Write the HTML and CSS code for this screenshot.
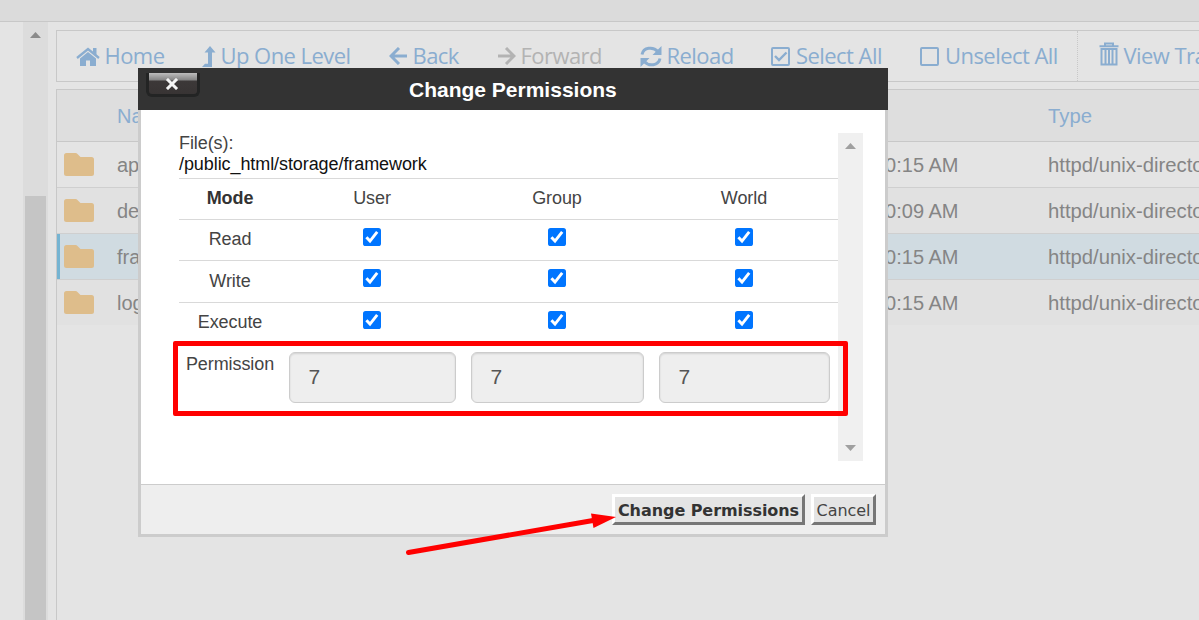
FILE: index.html
```html
<!DOCTYPE html>
<html lang="en">
<head>
<meta charset="utf-8">
<title>File Manager</title>
<link rel="stylesheet" href="styles.css">
</head>
<body>
<svg class="defs" width="0" height="0">
  <symbol id="check" viewBox="0 0 18 18"><rect width="18" height="18" rx="2.6" fill="#0075ff"/><path d="M3.400 9.200l3.600 3.900 7.200-9.300" fill="none" stroke="#fff" stroke-width="2.900"/></symbol>
  <symbol id="folder" viewBox="0 0 30 23"><path d="M2.500 0h9q1.200 0 2 .9l3 3.100h11q2.500 0 2.500 2.500v14q0 2.500-2.500 2.500h-25Q0 23 0 20.500V2.500Q0 0 2.500 0z" fill="#debd8b"/></symbol>
</svg>
<header class="topbar"></header>
<div class="workspace">
  <aside class="tree"></aside>
  <div class="scroll"><svg class="tri" width="11" height="6" viewBox="0 0 11 6"><path d="M5.500 0L11 6H0z"/></svg><div class="thumb"></div></div>
  <main class="files">
    <nav class="toolbar">
      <a class="tool"><svg width="24" height="19" viewBox="0 0 24 19"><path d="M1 11L12 2l11 9" fill="none" stroke="currentColor" stroke-width="2.300"/><path d="M17 1h3.500v7L17 5zM4 11.500l8-6.500 8 6.500V19h-6v-5.500h-4V19H4z" fill="currentColor"/></svg><span>Home</span></a>
      <a class="tool"><svg width="14" height="21" viewBox="0 0 14 21"><path d="M8 0l5.500 6.500H10V21H0l3-3.300h3V6.500H2.500z" fill="currentColor"/></svg><span>Up One Level</span></a>
      <a class="tool"><svg width="19" height="18" viewBox="0 0 19 18"><path d="M10 1L2 9l8 8M2.500 9H18" fill="none" stroke="currentColor" stroke-width="3"/></svg><span>Back</span></a>
      <a class="tool forward"><svg width="19" height="18" viewBox="0 0 19 18"><path d="M9 1l8 8-8 8M16.500 9H1" fill="none" stroke="currentColor" stroke-width="3"/></svg><span>Forward</span></a>
      <a class="tool"><svg width="22" height="21" viewBox="0 0 22 21"><path d="M2 8.500C3.500 1.500 13 0 18 5.800M20 12.500C18.500 19.500 9 21 4 15.200" fill="none" stroke="currentColor" stroke-width="3"/><path d="M21.500 0v9h-9zM.500 21v-9h9z" fill="currentColor"/></svg><span>Reload</span></a>
      <a class="tool box"><svg width="19" height="19" viewBox="0 0 19 19"><rect x="1" y="1" width="17" height="17" rx="1" fill="none" stroke="currentColor" stroke-width="2"/><path d="M4 9l4 4 7.500-7.500" fill="none" stroke="currentColor" stroke-width="2.400"/></svg><span>Select All</span></a>
      <a class="tool box"><svg width="19" height="19" viewBox="0 0 19 19"><rect x="1" y="1" width="17" height="17" rx="1" fill="none" stroke="currentColor" stroke-width="2"/></svg><span>Unselect All</span></a>
      <a class="tool trash"><svg width="20" height="24" viewBox="0 0 20 24"><path d="M.500 4.200h19M6 4V1.500h8V4" fill="none" stroke="currentColor" stroke-width="2"/><path d="M2.500 7v15.500h15V7zM6.500 7v15M10 7v15M13.500 7v15" fill="none" stroke="currentColor" stroke-width="2"/></svg><span>View Trash</span></a>
    </nav>
    <section class="list">
      <div class="row head"><span></span><span>Name</span><span></span><span class="type">Type</span></div>
      <div class="row"><svg class="folder"><use href="#folder"/></svg><span>app</span><span class="date">10:15 AM</span><span class="type">httpd/unix-directory</span></div>
      <div class="row even"><svg class="folder"><use href="#folder"/></svg><span>debugbar</span><span class="date">10:09 AM</span><span class="type">httpd/unix-directory</span></div>
      <div class="row selected"><svg class="folder"><use href="#folder"/></svg><span>framework</span><span class="date">10:15 AM</span><span class="type">httpd/unix-directory</span></div>
      <div class="row even last"><svg class="folder"><use href="#folder"/></svg><span>logs</span><span class="date">10:15 AM</span><span class="type">httpd/unix-directory</span></div>
    </section>
  </main>
</div>

<div class="dialog">
  <div class="titlebar">
    <div class="close"><svg width="14" height="12" viewBox="0 0 14 12"><path d="M3 2l8 8M11 2l-8 8" stroke="#f4f4f4" stroke-width="3" stroke-linecap="square"/></svg></div>
    <h1>Change Permissions</h1>
  </div>
  <div class="content">
    <div class="form">
      <div class="label">File(s):</div>
      <div class="path">/public_html/storage/framework</div>
      <div class="modes">
        <div class="mode"><b>Mode</b><span>User</span><span>Group</span><span>World</span></div>
        <div class="mode"><span>Read</span><svg><use href="#check"/></svg><svg><use href="#check"/></svg><svg><use href="#check"/></svg></div>
        <div class="mode tall"><span>Write</span><svg><use href="#check"/></svg><svg><use href="#check"/></svg><svg><use href="#check"/></svg></div>
        <div class="mode"><span>Execute</span><svg><use href="#check"/></svg><svg><use href="#check"/></svg><svg><use href="#check"/></svg></div>
        <div class="mode values"><span>Permission</span><div class="field">7</div><div class="field">7</div><div class="field">7</div></div>
      </div>
    </div>
    <div class="scroll light"><svg class="tri" width="11" height="6" viewBox="0 0 11 6"><path d="M5.500 0L11 6H0z"/></svg><svg class="tri" width="11" height="6" viewBox="0 0 11 6"><path d="M0 0h11L5.500 6z"/></svg></div>
  </div>
  <div class="actions"><div class="button primary">Change Permissions</div><div class="button">Cancel</div></div>
</div>
<div class="highlight"></div>
<svg class="arrow" width="212" height="46" viewBox="0 0 212 46"><path d="M3.500 42.500L188 10.500" stroke="#f00" stroke-width="5" stroke-linecap="round"/><path d="M186 3.500l25 3.500L188.500 18z" fill="#f00"/></svg>
</body>
</html>
```
FILE: styles.css
```css
* { box-sizing: border-box; }
body { margin: 0; width: 1199px; height: 620px; overflow: hidden; position: relative; background: #e4e4e4; font-family: "Liberation Sans", Arial, sans-serif; display: flex; flex-direction: column; }
.defs { position: absolute; }
.topbar { height: 22px; flex: none; background: #dbdbdb; border-bottom: 1px solid #c8c8c8; }
.workspace { flex: 1; display: flex; min-height: 0; }
.tree { width: 23px; flex: none; }
.scroll { width: 25px; flex: none; background: #dcdcdc; display: flex; flex-direction: column; padding: 10px 2px 0; }
.tri { flex: none; margin-left: 5px; fill: #8b8b8b; }
.thumb { flex: 1; width: 21px; margin-top: 158px; background: #c5c5c5; }
.files { flex: 1; min-width: 0; padding: 8px 0 0 8px; overflow: hidden; }
.toolbar { width: 1220px; height: 52px; border: 1px solid #c8c8c8; padding-left: 19px; display: grid; grid-template-columns: 126px 187px 108px 143px 131px 149px 157px 140px; }
.tool { display: flex; align-items: center; gap: 4.500px; color: #8aadd0; font: 400 22px/50px "Open Sans", sans-serif; letter-spacing: -.55px; white-space: nowrap; }
.tool svg { flex: none; }
.tool span { margin-top: -2px; }
.forward { color: #b3b3b3; }
.box { gap: 6px; }
.trash { border-left: 1px dotted #c8c8c8; padding-left: 21px; }
.trash svg { margin-top: -4px; }
.list { width: 1220px; height: 540px; margin-top: 7px; border: 1px solid #c8c8c8; }
.row { height: 46px; display: grid; grid-template-columns: 60px 757px 174px 1fr; align-items: center; border-bottom: 1px solid #cfcfcf; color: #858585; font-size: 20px; }
.row span { padding-top: 2px; }
.type { font-size: 20.300px; }
.head { height: 52px; background: #dedede; border-color: #c8c8c8; color: #8aadd0; }
.even { background: #e1e1e1; }
.last { border-bottom-color: #e4e4e4; }
.selected { background: #d0dbe1; box-shadow: inset 3px 0 #75b4d2; }
.folder { width: 30px; height: 23px; margin-left: 7px; }
.dialog { position: absolute; left: 138px; top: 68px; width: 750px; height: 469px; background: #fff; display: flex; flex-direction: column; }
.titlebar { height: 42px; background: #333; display: flex; padding: 5px 0 0 8px; }
.close { width: 54px; height: 24px; background: linear-gradient(#bdbdbd, #858585 7px, #3c3838 8px, #383434); border: 3px solid #232424; border-top: 0; border-radius: 0 0 6px 6px; display: flex; align-items: center; justify-content: center; padding-right: 3px; }
h1 { margin: 0 0 0 209px; color: #fff; font-size: 21px; line-height: 34px; white-space: nowrap; }
.content { height: 374px; border: 3px solid #ccc; border-width: 0 3px; padding: 23px 22px 0 38px; display: flex; }
.form { width: 659px; font-size: 18px; line-height: 21px; color: #444; letter-spacing: -.08px; }
.path { color: #111; }
.modes { margin-top: 3px; }
.mode { display: grid; grid-template-columns: 102px 182px 188px 186px; height: 41px; border-top: 1px solid #d9d9d9; text-align: center; padding-top: 9px; justify-items: center; }
.tall { height: 42px; padding-top: 10px; }
.mode b { color: #333; }
.mode svg { width: 18px; height: 18px; margin-top: -1px; }
.mode.tall svg { margin-top: -2px; }
.values { border-color: transparent; padding-top: 10px; }
.field { width: calc(100% - 15px); height: 51px; margin: -2px 0 0; border: 1px solid #ccc; border-radius: 6px; background: #eee; box-shadow: inset 0 1px 2px rgba(0,0,0,.12); text-align: left; padding-left: 19px; font-size: 21px; line-height: 48px; color: #555; }
.light { background: #f0f0f0; height: 328px; justify-content: space-between; padding-bottom: 10px; }
.light .tri { fill: #a0a0a0; }
.actions { flex: 1; background: #eee; border: 3px solid #ccc; border-top-width: 1px; display: flex; justify-content: flex-end; gap: 6px; padding: 9px 9px 0 0; }
.button { height: 31px; width: 65px; border: 3px solid; border-color: #fff #767676 #767676 #fff; background: #e4e4e4; font: 16px/27px "DejaVu Sans", sans-serif; letter-spacing: -.06px; color: #444; text-align: center; white-space: nowrap; }
.primary { width: 193px; font-weight: 700; color: #333; }
.highlight { position: absolute; left: 173px; top: 341px; width: 675px; height: 75px; border: 5px solid #f00; border-radius: 2px; }
.arrow { position: absolute; left: 405px; top: 510px; }
```
